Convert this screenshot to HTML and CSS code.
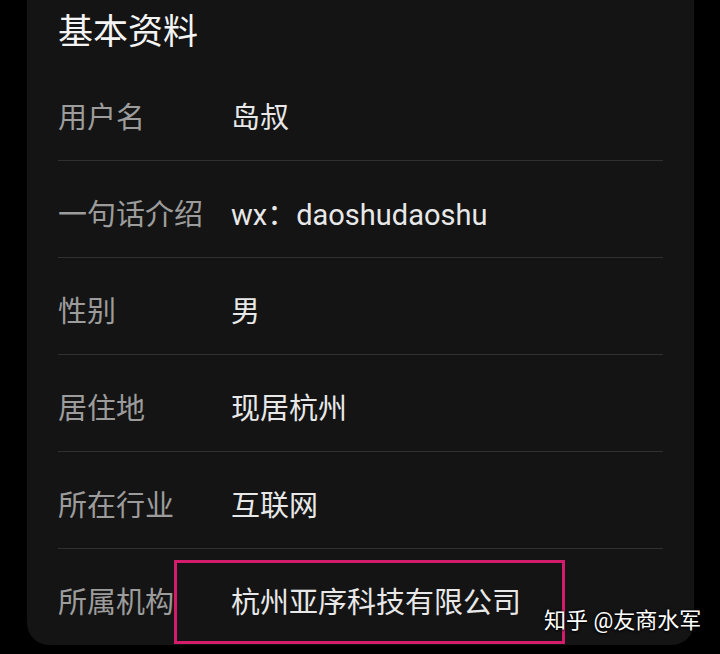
FILE: index.html
```html
<!DOCTYPE html>
<html lang="zh-CN">
<head>
  <meta charset="UTF-8" />
  <meta name="viewport" content="width=device-width, initial-scale=1.0" />
  <title>基本资料</title>
  <link rel="stylesheet" href="styles.css">
</head>
<body>
  <div class="card">
    <div class="title">基本资料</div>
    <div class="row">
      <div class="label">用户名</div>
      <div class="value">岛叔</div>
    </div>
    <div class="row">
      <div class="label">一句话介绍</div>
      <div class="value">wx：daoshudaoshu</div>
    </div>
    <div class="row">
      <div class="label">性别</div>
      <div class="value">男</div>
    </div>
    <div class="row">
      <div class="label">居住地</div>
      <div class="value">现居杭州</div>
    </div>
    <div class="row">
      <div class="label">所在行业</div>
      <div class="value">互联网</div>
    </div>
    <div class="row last">
      <div class="label">所属机构</div>
      <div class="value">杭州亚序科技有限公司</div>
    </div>
    <!-- highlight drawn over the last row -->
    <div class="mark"></div>
  </div>
  <div class="watermark">知乎 @友商水军</div>
</body>
</html>
```

FILE: styles.css
```css
* { box-sizing: border-box; }
body {
  margin: 0;
  background: #000;
  font-family: Roboto, "Noto Sans CJK SC", sans-serif;
  height: 654px;
  overflow: hidden;
  position: relative;
}
.card {
  position: relative;
  width: 667px;
  height: 645px;
  margin-left: 27px;
  padding: 0 31px;
  background: #141414;
  border-radius: 0 0 22px 22px;
}
.title {
  height: 64px;
  padding-top: 3px;
  line-height: 60px;
  font-size: 35px;
  color: #f4f4f4;
}
.row {
  display: flex;
  align-items: center;
  height: 97px;
  padding-top: 5px;
  border-bottom: 1px solid #303030;
  font-size: 29px;
}
.row.last {
  border-bottom: none;
}
.label {
  width: 173px;
  color: #9c9c9c;
  white-space: nowrap;
}
.value {
  color: #e8e8e8;
  white-space: nowrap;
}
.mark {
  position: absolute;
  left: 147px;
  top: 560px;
  width: 391px;
  height: 84px;
  border: 3px solid #d41c6c;
}
.watermark {
  position: absolute;
  left: 544px;
  top: 606px;
  font-size: 22px;
  line-height: 30px;
  color: #fff;
  text-shadow: 0 0 3px #000, 0 1px 2px #000;
  white-space: nowrap;
}
```
